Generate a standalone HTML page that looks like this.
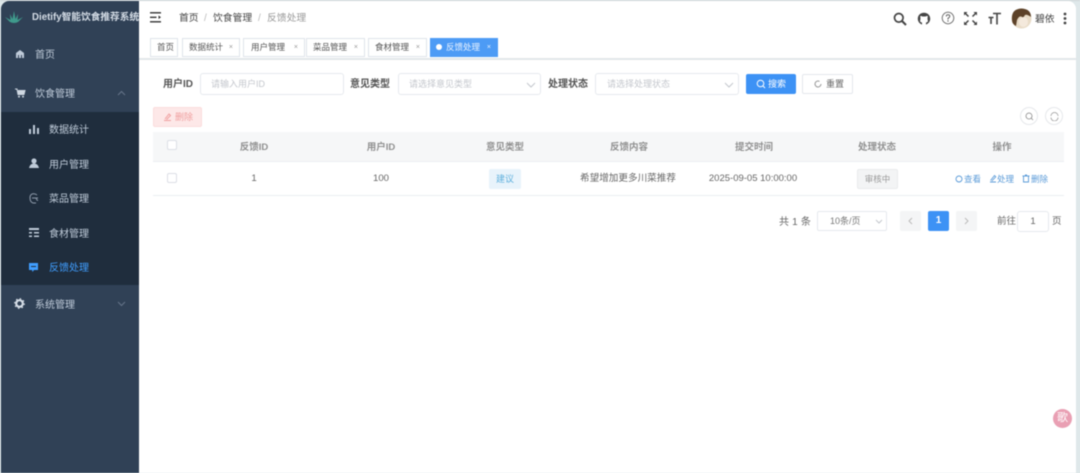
<!DOCTYPE html>
<html lang="zh-CN">
<head>
<meta charset="utf-8">
<title>Dietify</title>
<style>
*{box-sizing:border-box;margin:0;padding:0}
html,body{width:1080px;height:473px;overflow:hidden;background:#dfe8ea;font-family:"Liberation Sans","Noto Sans CJK SC",sans-serif}
.a{position:absolute;white-space:nowrap}
#root{position:relative;width:1080px;height:473px;overflow:hidden;filter:blur(.55px)}
#main{left:139px;top:1px;width:937px;height:472px;background:#fff;border-top-right-radius:8px}
#side{left:1px;top:1px;width:138px;height:472px;background:#304156;border-top-left-radius:8px;overflow:hidden}
#sub{left:1px;top:112px;width:138px;height:173px;background:#1f2d3d}
.m{font-size:10px;color:#bfcbd9;line-height:14px;margin-top:1px}
.t{height:19px;top:38px;border:1px solid #dfe4ea;background:#fff;font-size:8.5px;line-height:17px;color:#555;padding-left:6px}
.t i{position:absolute;right:6px;top:0;font-style:normal;font-size:7px;color:#999}
.l{font-size:10px;color:#555;font-weight:bold;line-height:14px}
.inp{top:73px;height:22px;border:1px solid #e6e9ee;border-radius:3px;background:#fff;font-size:9px;line-height:20px;color:#c4c7cd;padding-left:10px}
.th{font-size:9.5px;color:#777;line-height:14px;transform:translateX(-50%);font-weight:bold;opacity:.8}
.td{font-size:9.6px;color:#666;line-height:14px;transform:translateX(-50%)}
.op{font-size:8.5px;color:#5b9bd8;line-height:12px;top:173px}
.cb{width:10px;height:10px;border:1px solid #dcdfe6;border-radius:2px;background:#fff;left:167px}
svg{position:absolute;display:block}
</style>
</head>
<body>
<div id="root">
<div class="a" style="left:0;top:0;width:1080px;height:1px;background:#cfd6d8"></div>
<div class="a" id="main"></div>
<div class="a" id="side"></div>
<div class="a" id="sub"></div>

<svg style="left:4px;top:10px" width="20" height="16" viewBox="0 0 20 16"><path d="M10 1 L11.500 9 L14 4 L13.500 10 L19 7 L14 12 Q10 14 6 12 L1 7 L6.500 10 L6 4 L8.500 9Z" fill="#3f9a8c"/></svg>
<div class="a" style="left:32px;top:11px;width:107px;overflow:hidden;font-size:9.700px;font-weight:bold;color:#d5dde6;line-height:14px">Dietify智能饮食推荐系统</div>

<svg style="left:15px;top:49px" width="10" height="10" viewBox="0 0 10 10"><path d="M5 1 L9 4 V9 H7 V6 H6 V9 H4 V6 H3 V9 H1 V4Z" fill="#bfcbd9"/></svg>
<div class="a m" style="left:35px;top:48px">首页</div>
<svg style="left:15px;top:88px" width="11" height="10" viewBox="0 0 11 10"><path d="M0 1 H2 L3 6.500 H9 L10 2.500 H3" fill="#cfd8e2" stroke="#cfd8e2"/><circle cx="4" cy="8.600" r="1" fill="#cfd8e2"/><circle cx="8" cy="8.600" r="1" fill="#cfd8e2"/></svg>
<div class="a m" style="left:35px;top:87px">饮食管理</div>
<svg style="left:117px;top:90px" width="9" height="6" viewBox="0 0 9 6"><path d="M1 5 L4.500 1.500 L8 5" fill="none" stroke="#66758a"/></svg>

<svg style="left:29px;top:124px" width="10" height="10" viewBox="0 0 10 10"><path d="M0 5h2v5H0zM4 1h2v9H4zM8 4h2v6H8z" fill="#bfcbd9"/></svg>
<div class="a m" style="left:49px;top:123px">数据统计</div>
<svg style="left:29px;top:158px" width="10" height="11" viewBox="0 0 10 11"><circle cx="5" cy="3" r="2.600" fill="#bfcbd9"/><path d="M0 10 Q1 5.500 5 5.500 Q9 5.500 10 10Z" fill="#bfcbd9"/></svg>
<div class="a m" style="left:49px;top:158px">用户管理</div>
<svg style="left:29px;top:193px" width="10" height="11" viewBox="0 0 10 11"><path d="M8 2 Q6 .5 4 .8 Q.8 1.500 1 5 Q1 9 4 10 H7 M3 5 H9 M7 5 Q8 8 9 7" fill="none" stroke="#8f9bab" stroke-width="1"/></svg>
<div class="a m" style="left:49px;top:192px">菜品管理</div>
<svg style="left:29px;top:227px" width="10" height="11" viewBox="0 0 10 11"><path d="M0 1h10v2H0zM0 5h3v1.500H0zM5 5h5v1.500H5zM0 8.500h3V10H0zM5 8.500h5V10H5z" fill="#bfcbd9"/></svg>
<div class="a m" style="left:49px;top:227px">食材管理</div>
<svg style="left:28px;top:262px" width="11" height="11" viewBox="0 0 11 11"><path d="M1 1 H10 V8 H6 L4.500 10 L4 8 H1Z" fill="#409eff"/><path d="M3 4.500h5" stroke="#1f2d3d"/></svg>
<div class="a m" style="left:49px;top:261px;color:#409eff">反馈处理</div>

<svg style="left:14px;top:298px" width="11" height="11" viewBox="0 0 11 11"><circle cx="5.500" cy="5.500" r="3.300" fill="none" stroke="#d5dde6" stroke-width="2.200"/><circle cx="5.500" cy="5.500" r="4.800" fill="none" stroke="#d5dde6" stroke-width="1.200" stroke-dasharray="1.500 2.270"/></svg>
<div class="a m" style="left:35px;top:298px">系统管理</div>
<svg style="left:117px;top:301px" width="9" height="6" viewBox="0 0 9 6"><path d="M1 1 L4.500 4.500 L8 1" fill="none" stroke="#66758a"/></svg>

<svg style="left:150px;top:12px" width="12" height="11" viewBox="0 0 12 11"><path d="M0 .8h11M0 9.800h11M0 5.300h6.500" stroke="#333" stroke-width="1.400"/><path d="M8.500 3.500 L11 5.300 L8.500 7Z" fill="#333"/></svg>
<div class="a" style="left:179px;top:12px;font-size:9.800px;line-height:14px;color:#444">首页</div>
<div class="a" style="left:204px;top:12px;font-size:10px;line-height:14px;color:#bbb">/</div>
<div class="a" style="left:213px;top:12px;font-size:9.800px;line-height:14px;color:#444">饮食管理</div>
<div class="a" style="left:258px;top:12px;font-size:10px;line-height:14px;color:#bbb">/</div>
<div class="a" style="left:267px;top:12px;font-size:9.800px;line-height:14px;color:#999">反馈处理</div>

<svg style="left:893px;top:12px" width="14" height="14" viewBox="0 0 14 14"><circle cx="5.800" cy="5.800" r="4.300" fill="none" stroke="#444" stroke-width="1.700"/><path d="M9 9 L13 13" stroke="#444" stroke-width="2"/></svg>
<svg style="left:917px;top:12px" width="14" height="14" viewBox="0 0 14 14"><path d="M7 .8 C3.300 .8 .8 3.500 .8 6.800 C.8 9.500 2.500 11.700 5 12.600 V10.500 C3.800 10.500 3.300 9.800 3 9 C4 6 3 5 3.300 4 C4 3.800 5 4.200 5.500 4.500 H8.500 C9 4.200 10 3.800 10.700 4 C11 5 10 6 11 9 C10.700 9.800 10.200 10.500 9 10.500 V12.600 C11.500 11.700 13.200 9.500 13.200 6.800 C13.200 3.500 10.700 .8 7 .8Z" fill="#444"/></svg>
<svg style="left:941px;top:11px" width="14" height="14" viewBox="0 0 14 14"><circle cx="7" cy="7" r="5.800" fill="none" stroke="#666" stroke-width=".9"/><path d="M5.300 5.500 Q5.300 3.800 7 3.800 Q8.800 3.800 8.800 5.300 Q8.800 6.300 7 7.300 V8.500" fill="none" stroke="#666"/><circle cx="7" cy="10" r=".7" fill="#666"/></svg>
<svg style="left:964px;top:12px" width="13" height="13" viewBox="0 0 13 13"><path d="M1 1 L4.500 4.500M12 1 L8.500 4.500M12 12 L8.500 8.500M1 12 L4.500 8.500" fill="none" stroke="#444" stroke-width="1.500"/><path d="M0 0h3.500L0 3.500zM13 0H9.500L13 3.500zM13 13H9.500L13 9.500zM0 13h3.500L0 9.500z" fill="#444"/></svg>
<svg style="left:988px;top:12px" width="13" height="13" viewBox="0 0 13 13"><path d="M5 1.500h8M9 1.500V12.500M.5 5.500h5M3 5.500V12" fill="none" stroke="#444" stroke-width="1.600"/></svg>
<svg style="left:1011px;top:8px" width="21" height="21" viewBox="0 0 21 21"><circle cx="10.500" cy="10.500" r="10" fill="#e9dcc8"/><path d="M1 12 Q0 1 10.500 .5 Q20 1 20 9 Q16 6 14 7 L12 10 Q9 6 6 12 L5 18 Q1 16 1 12Z" fill="#5d4229"/><ellipse cx="12.500" cy="14" rx="4.500" ry="5" fill="#f4e9dc"/></svg>
<div class="a" style="left:1035px;top:13px;font-size:9.800px;line-height:14px;color:#444">碧依</div>
<svg style="left:1063px;top:12px" width="4" height="13" viewBox="0 0 4 13"><circle cx="2" cy="2" r="1.400" fill="#444"/><circle cx="2" cy="6.500" r="1.400" fill="#444"/><circle cx="2" cy="11" r="1.400" fill="#444"/></svg>

<div class="a" style="left:139px;top:58px;width:937px;height:1.500px;background:#e3e7ea"></div>
<div class="a t" style="left:150px;width:28px">首页</div>
<div class="a t" style="left:182px;width:58px">数据统计<i>×</i></div>
<div class="a t" style="left:243px;width:62px;padding-left:7px">用户管理<i>×</i></div>
<div class="a t" style="left:306px;width:59px">菜品管理<i>×</i></div>
<div class="a t" style="left:368px;width:59px">食材管理<i>×</i></div>
<div class="a t" style="left:430px;width:68px;background:#4d9bf5;border-color:#4d9bf5;color:#e8f2ff;padding-left:15px">反馈处理<i style="color:#e8f2ff">×</i></div>
<div class="a" style="left:436px;top:44px;width:6px;height:6px;border-radius:50%;background:#fff"></div>

<div class="a l" style="left:163px;top:78px">用户ID</div>
<div class="a inp" style="left:200px;width:144px">请输入用户ID</div>
<div class="a l" style="left:350px;top:78px">意见类型</div>
<div class="a inp" style="left:398px;width:143px">请选择意见类型</div>
<svg style="left:526px;top:82px" width="10" height="6" viewBox="0 0 10 6"><path d="M1 1 L5 5 L9 1" fill="none" stroke="#c4c7cd"/></svg>
<div class="a l" style="left:548px;top:78px">处理状态</div>
<div class="a inp" style="left:595px;width:144px;padding-left:11px">请选择处理状态</div>
<svg style="left:724px;top:82px" width="10" height="6" viewBox="0 0 10 6"><path d="M1 1 L5 5 L9 1" fill="none" stroke="#c4c7cd"/></svg>

<div class="a" style="left:746px;top:74px;width:50px;height:20px;background:#3d92f5;border-radius:2px;color:#fff;font-size:9px;line-height:20px;padding-left:22px">搜索</div>
<svg style="left:756px;top:79px" width="10" height="10" viewBox="0 0 10 10"><circle cx="4.500" cy="4.500" r="3.300" fill="none" stroke="#fff"/><path d="M7 7 L9 9" stroke="#fff"/></svg>
<div class="a" style="left:802px;top:74px;width:51px;height:20px;background:#fff;border:1px solid #e4e7ec;border-radius:2px;color:#666;font-size:9px;line-height:18px;padding-left:23px">重置</div>
<svg style="left:813px;top:79px" width="10" height="10" viewBox="0 0 10 10"><path d="M8 5 A3 3 0 1 1 6.500 2.400" fill="none" stroke="#999"/></svg>

<div class="a" style="left:153px;top:107px;width:49px;height:20px;background:#fde8e8;border:1px solid #fbdcdc;border-radius:2px;color:#f0a0a0;font-size:9px;line-height:18px;padding-left:21px">删除</div>
<svg style="left:163px;top:112px" width="9" height="10" viewBox="0 0 9 10"><path d="M1 8.500h7M2 7 L6 2 L7.500 3.500 L3.500 7.500" fill="none" stroke="#f0a0a0"/></svg>
<div class="a" style="left:1020px;top:107px;width:18px;height:18px;border-radius:50%;border:1px solid #e6e8eb;background:#fff"></div>
<svg style="left:1025px;top:112px" width="9" height="9" viewBox="0 0 9 9"><circle cx="4" cy="4" r="3" fill="none" stroke="#888" stroke-width=".8"/><path d="M6 6 L8 8" stroke="#888" stroke-width=".8"/></svg>
<div class="a" style="left:1045px;top:107px;width:18px;height:18px;border-radius:50%;border:1px solid #e6e8eb;background:#fff"></div>
<svg style="left:1050px;top:112px" width="9" height="9" viewBox="0 0 9 9"><path d="M1 4 A3.500 3.500 0 0 1 8 4 M8 5.500 A3.500 3.500 0 0 1 1 5.500" fill="none" stroke="#999" stroke-width=".8"/></svg>

<div class="a" style="left:153px;top:132px;width:911px;height:30px;background:#f6f7f8;border-bottom:1px solid #ebeef2"></div>
<div class="a" style="left:153px;top:195px;width:911px;height:1px;background:#ebeef2"></div>
<div class="a cb" style="top:140px"></div>
<div class="a th" style="left:254px;top:141px">反馈ID</div>
<div class="a th" style="left:381px;top:141px">用户ID</div>
<div class="a th" style="left:505px;top:141px">意见类型</div>
<div class="a th" style="left:629px;top:141px">反馈内容</div>
<div class="a th" style="left:754px;top:141px">提交时间</div>
<div class="a th" style="left:877px;top:141px">处理状态</div>
<div class="a th" style="left:1002px;top:141px">操作</div>

<div class="a cb" style="top:173px"></div>
<div class="a td" style="left:254px;top:172px">1</div>
<div class="a td" style="left:381px;top:172px">100</div>
<div class="a" style="left:489px;top:169px;width:32px;height:20px;background:#e8f3fb;border-radius:2px;color:#5fb0dd;font-size:9px;line-height:20px;text-align:center">建议</div>
<div class="a td" style="left:628px;top:172px">希望增加更多川菜推荐</div>
<div class="a td" style="left:753px;top:172px;font-size:9.500px">2025-09-05 10:00:00</div>
<div class="a" style="left:857px;top:169px;width:41px;height:20px;background:#f3f4f5;border:1px solid #e9ebed;border-radius:2px;color:#999;font-size:8.500px;line-height:18px;text-align:center">审核中</div>

<svg style="left:955px;top:175px" width="8" height="8" viewBox="0 0 8 8"><circle cx="4" cy="4" r="3" fill="none" stroke="#5b9bd8" stroke-width=".9"/></svg>
<div class="a op" style="left:964px">查看</div>
<svg style="left:989px;top:174px" width="8" height="9" viewBox="0 0 8 9"><path d="M1 8h6M1.500 6.500 L5.500 1.500 L6.800 2.800 L2.800 7" fill="none" stroke="#5b9bd8" stroke-width=".9"/></svg>
<div class="a op" style="left:997px">处理</div>
<svg style="left:1022px;top:174px" width="8" height="9" viewBox="0 0 8 9"><path d="M.5 2h7M1.500 2v6h5V2M3 1h2" fill="none" stroke="#5b9bd8" stroke-width=".9"/></svg>
<div class="a op" style="left:1031px">删除</div>

<div class="a" style="left:779px;top:216px;font-size:10px;line-height:14px;color:#666;letter-spacing:.2px">共 1 条</div>
<div class="a" style="left:817px;top:211px;width:70px;height:20px;border:1px solid #e6e9ee;border-radius:2px;font-size:9px;line-height:18px;color:#777;padding-left:12px">10条/页</div>
<svg style="left:875px;top:219px" width="8" height="5" viewBox="0 0 8 5"><path d="M1 1 L4 4 L7 1" fill="none" stroke="#c4c7cd"/></svg>
<div class="a" style="left:900px;top:211px;width:21px;height:20px;background:#f4f5f6;border-radius:2px"></div>
<svg style="left:908px;top:217px" width="5" height="8" viewBox="0 0 5 8"><path d="M4 1 L1 4 L4 7" fill="none" stroke="#bbb"/></svg>
<div class="a" style="left:928px;top:211px;width:21px;height:20px;background:#3d92f5;border-radius:2px;color:#fff;font-size:10px;font-weight:bold;line-height:20px;text-align:center">1</div>
<div class="a" style="left:956px;top:211px;width:21px;height:20px;background:#f4f5f6;border-radius:2px"></div>
<svg style="left:964px;top:217px" width="5" height="8" viewBox="0 0 5 8"><path d="M1 1 L4 4 L1 7" fill="none" stroke="#bbb"/></svg>
<div class="a" style="left:997px;top:215px;font-size:9.500px;line-height:14px;color:#666">前往</div>
<div class="a" style="left:1017px;top:211px;width:32px;height:21px;border:1px solid #e6e9ee;border-radius:3px;font-size:9.500px;line-height:19px;color:#666;text-align:center">1</div>
<div class="a" style="left:1052px;top:215px;font-size:9.500px;line-height:14px;color:#666">页</div>

<div class="a" style="left:1053px;top:409px;width:19px;height:19px;border-radius:50%;background:#e99fb3;color:#fff;font-size:11px;line-height:19px;text-align:center">歌</div>
</div>
</body>
</html>
